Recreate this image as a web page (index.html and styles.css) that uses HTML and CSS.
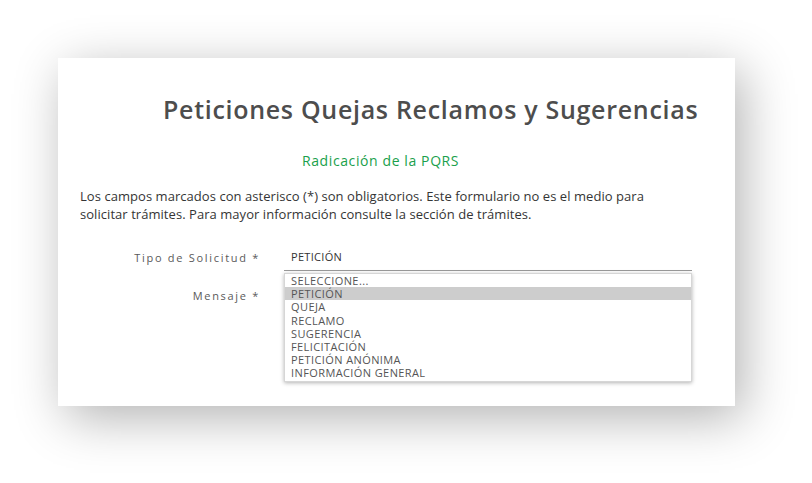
FILE: index.html
```html
<!DOCTYPE html>
<html lang="es">
<head>
  <meta charset="UTF-8" />
  <meta name="viewport" content="width=device-width, initial-scale=1.0" />
  <title>PQRS</title>
  <link rel="stylesheet" href="styles.css">
</head>
<body>
  <div class="card">
    <h1 class="title">Peticiones Quejas Reclamos y Sugerencias</h1>
    <h2 class="subtitle">Radicación de la PQRS</h2>
    <p class="note">Los campos marcados con asterisco (*) son obligatorios. Este formulario no es el medio para solicitar trámites. Para mayor información consulte la sección de trámites.</p>

    <!-- Formulario de radicación -->
    <form class="pqrs-form">
      <label class="field-label">Tipo de Solicitud *</label>
      <div class="field select-field">
        <div class="select-value">PETICIÓN</div>
        <!-- Lista desplegada del tipo de solicitud -->
        <ul class="options">
          <li>SELECCIONE...</li>
          <li class="active">PETICIÓN</li>
          <li>QUEJA</li>
          <li>RECLAMO</li>
          <li>SUGERENCIA</li>
          <li>FELICITACIÓN</li>
          <li>PETICIÓN ANÓNIMA</li>
          <li>INFORMACIÓN GENERAL</li>
        </ul>
      </div>

      <label class="field-label">Mensaje *</label>
      <div class="field">
        <textarea class="message" rows="3"></textarea>
      </div>
    </form>
  </div>
</body>
</html>
```

FILE: styles.css
```css
body {
  font-family: "Open Sans", "DejaVu Sans", sans-serif;
  margin: 0;
  padding: 58px 0 77px 58px;
  min-height: 483px;
  box-sizing: border-box;
  background-color: #fff;
  color: #444;
}

.card {
  box-sizing: border-box;
  width: 677px;
  height: 348px;
  padding: 36px 22px 0 22px;
  background-color: #fff;
  box-shadow: 8px 12px 48px rgba(0, 0, 0, 0.3);
}

.title {
  margin: 0 0 27px 0;
  padding-left: 83px;
  font-size: 25px;
  font-weight: 600;
  line-height: 30px;
  letter-spacing: 0.7px;
  color: #4d4d4d;
  white-space: nowrap;
}

.subtitle {
  margin: 0 0 16px 0;
  padding-left: 222px;
  font-size: 14px;
  font-weight: 400;
  line-height: 20px;
  letter-spacing: 0.6px;
  color: #1a9f4c;
}

.note {
  width: 590px;
  margin: 0 0 23px 0;
  font-size: 13px;
  line-height: 18px;
  letter-spacing: 0.05px;
  color: #353535;
}

.pqrs-form {
  display: grid;
  grid-template-columns: 180px 408px;
  column-gap: 24px;
  row-gap: 13px;
}

.field-label {
  padding-top: 5px;
  text-align: right;
  font-size: 11px;
  line-height: 14px;
  letter-spacing: 1.7px;
  color: #5a5a5a;
}

.field {
  position: relative;
}

.select-value {
  padding: 4px 7px 6px 7px;
  font-size: 11px;
  line-height: 14px;
  letter-spacing: 0.3px;
  color: #333;
  border-bottom: 1px solid #999;
}

.message {
  display: block;
  box-sizing: border-box;
  width: 100%;
  height: 36px;
  border: none;
  border-bottom: 1px solid #999;
  resize: none;
}

.options {
  position: absolute;
  top: 27px;
  left: 0;
  right: 0;
  z-index: 2;
  margin: 0;
  padding: 0 0 1px 0;
  list-style: none;
  background-color: #fff;
  border: 1px solid #d6d6d6;
  box-shadow: 0 1px 4px rgba(0, 0, 0, 0.3);
}

.options li {
  padding-left: 6px;
  font-size: 11px;
  line-height: 13.2px;
  letter-spacing: 0.4px;
  color: #555;
}

.options li.active {
  background-color: #cdcdcd;
}
```
